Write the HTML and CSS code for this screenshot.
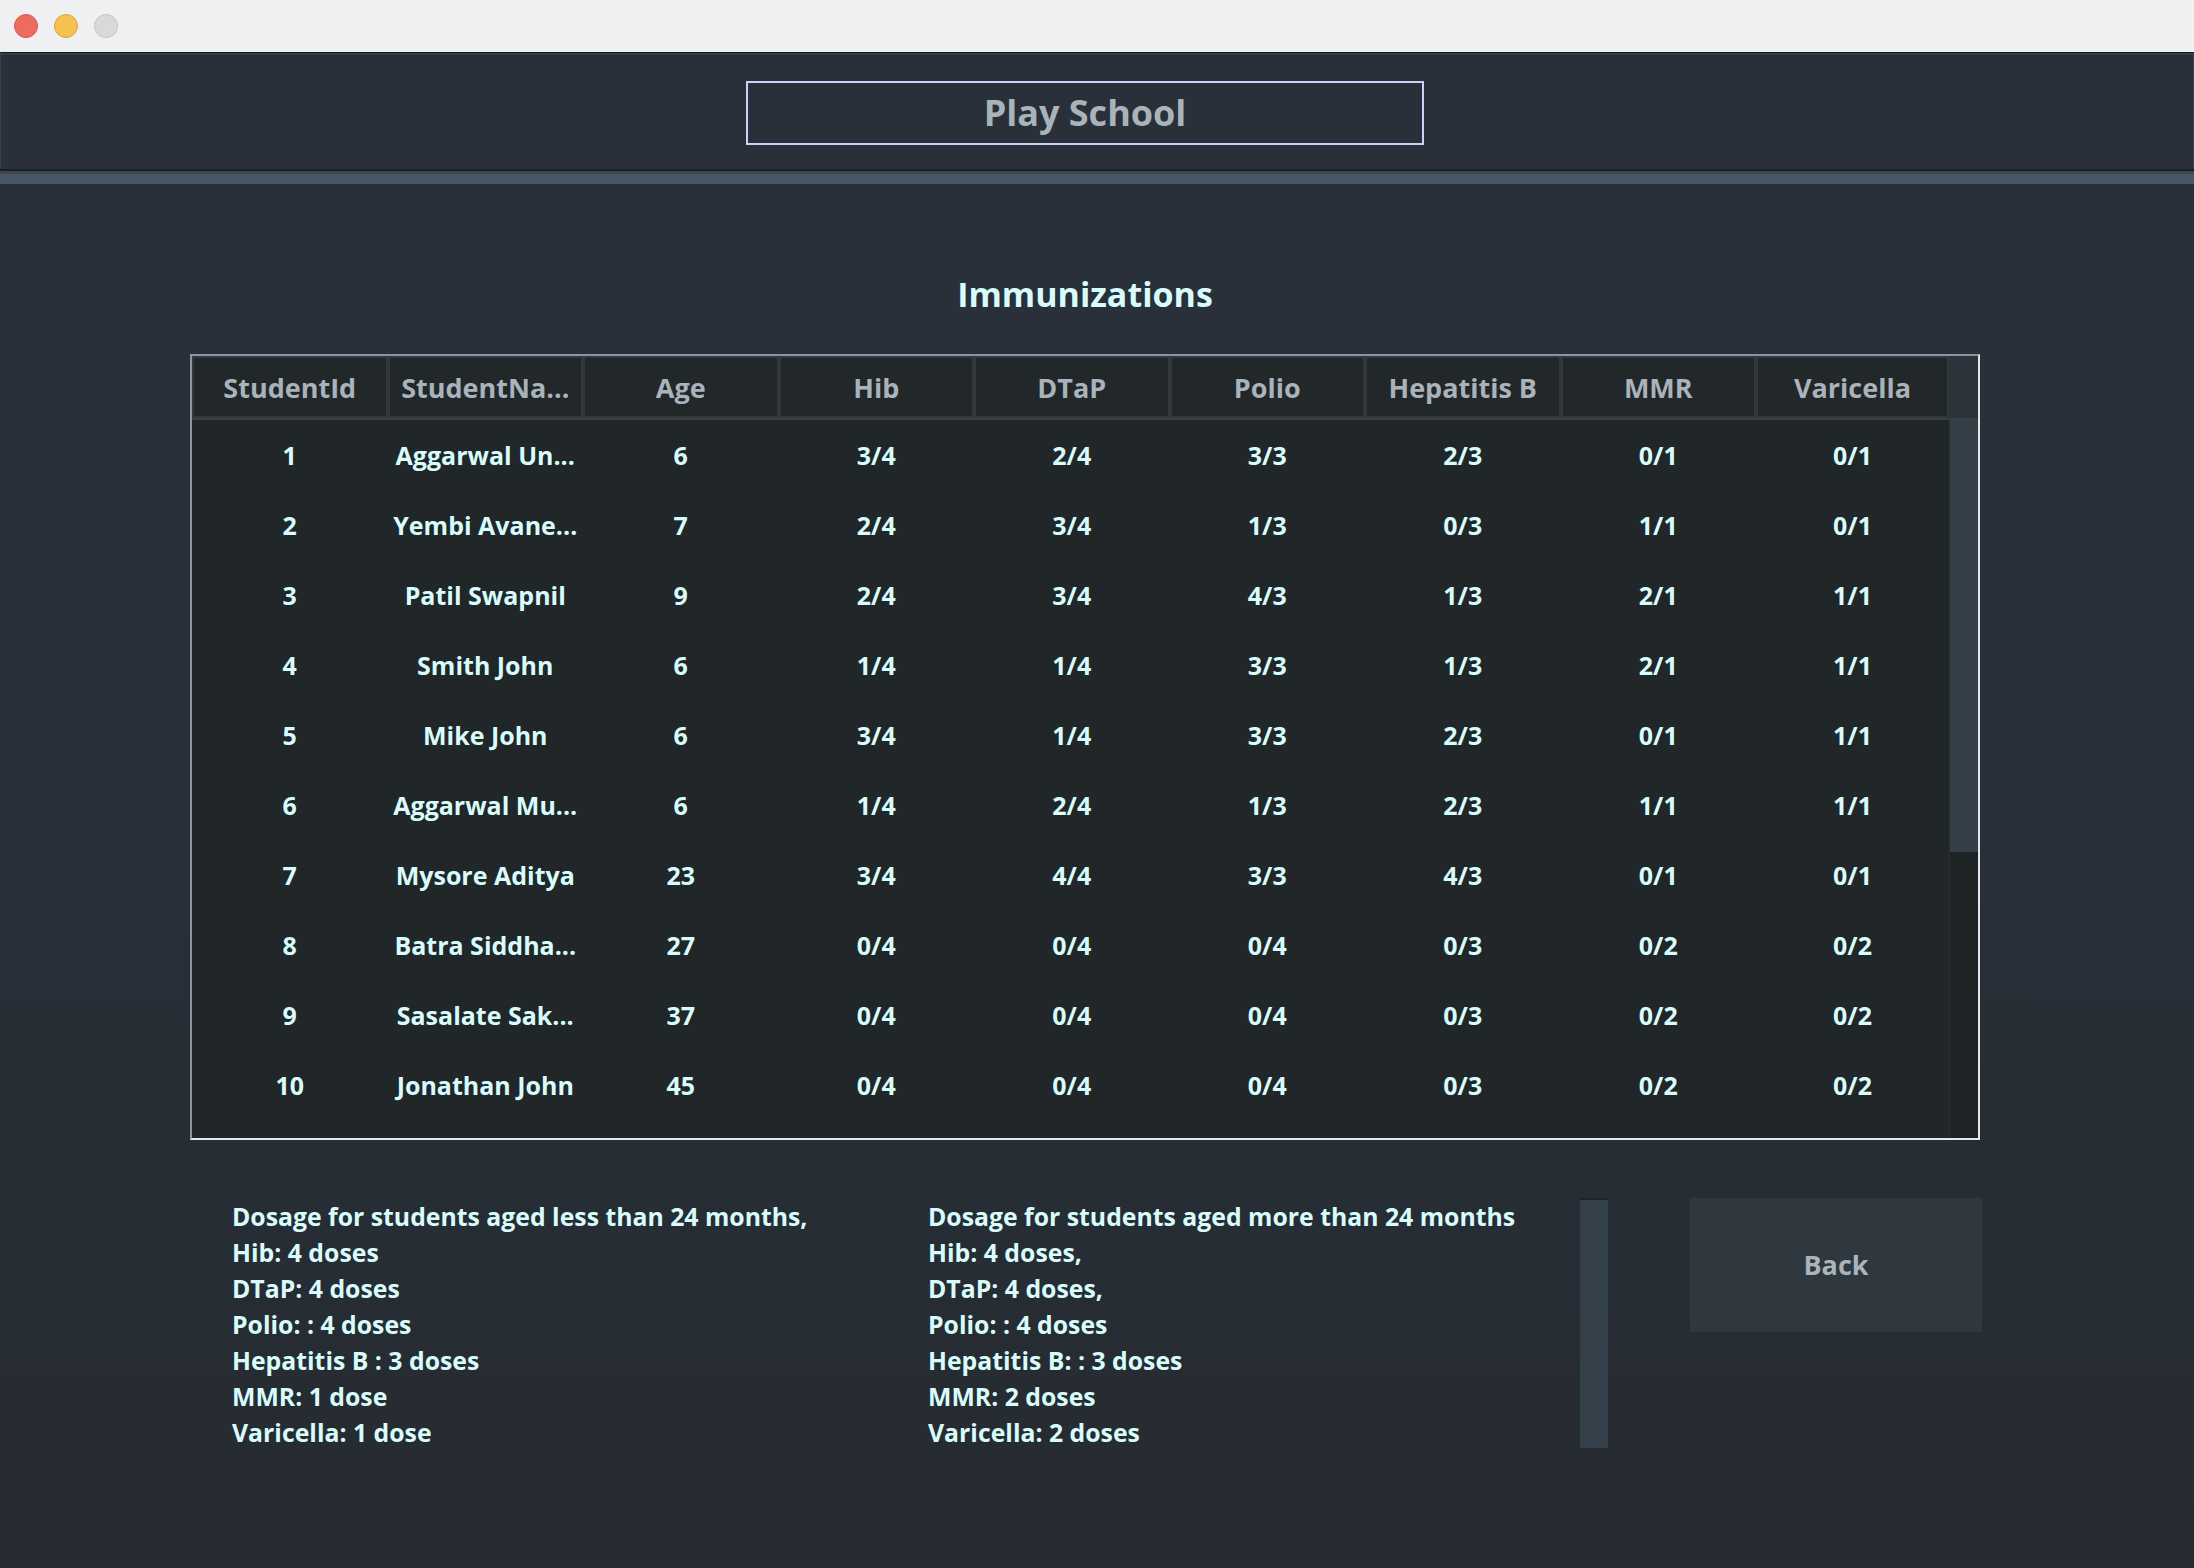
FILE: index.html
```html
<!DOCTYPE html>
<html lang="en">
<head>
<meta charset="utf-8">
<title>Play School - Immunizations</title>
<link rel="stylesheet" href="styles.css">
</head>
<body>
<div class="window">
  <div class="titlebar">
    <span class="light red"></span>
    <span class="light yellow"></span>
    <span class="light grey"></span>
  </div>
  <header class="app-header">
    <div class="brand">Play School</div>
  </header>
  <div class="divider"></div>
  <main class="content">
    <h1 class="page-title">Immunizations</h1>
    <div class="table">
      <div class="thead">
        <div class="th">StudentId</div>
        <div class="th">StudentNa...</div>
        <div class="th">Age</div>
        <div class="th">Hib</div>
        <div class="th">DTaP</div>
        <div class="th">Polio</div>
        <div class="th">Hepatitis B</div>
        <div class="th">MMR</div>
        <div class="th">Varicella</div>
        <div class="th-corner"></div>
      </div>
      <div class="tbody-wrap">
        <div class="tbody">
          <div class="row"><span>1</span><span>Aggarwal Un...</span><span>6</span><span>3/4</span><span>2/4</span><span>3/3</span><span>2/3</span><span>0/1</span><span>0/1</span></div>
          <div class="row"><span>2</span><span>Yembi Avane...</span><span>7</span><span>2/4</span><span>3/4</span><span>1/3</span><span>0/3</span><span>1/1</span><span>0/1</span></div>
          <div class="row"><span>3</span><span>Patil Swapnil</span><span>9</span><span>2/4</span><span>3/4</span><span>4/3</span><span>1/3</span><span>2/1</span><span>1/1</span></div>
          <div class="row"><span>4</span><span>Smith John</span><span>6</span><span>1/4</span><span>1/4</span><span>3/3</span><span>1/3</span><span>2/1</span><span>1/1</span></div>
          <div class="row"><span>5</span><span>Mike John</span><span>6</span><span>3/4</span><span>1/4</span><span>3/3</span><span>2/3</span><span>0/1</span><span>1/1</span></div>
          <div class="row"><span>6</span><span>Aggarwal Mu...</span><span>6</span><span>1/4</span><span>2/4</span><span>1/3</span><span>2/3</span><span>1/1</span><span>1/1</span></div>
          <div class="row"><span>7</span><span>Mysore Aditya</span><span>23</span><span>3/4</span><span>4/4</span><span>3/3</span><span>4/3</span><span>0/1</span><span>0/1</span></div>
          <div class="row"><span>8</span><span>Batra Siddha...</span><span>27</span><span>0/4</span><span>0/4</span><span>0/4</span><span>0/3</span><span>0/2</span><span>0/2</span></div>
          <div class="row"><span>9</span><span>Sasalate Sak...</span><span>37</span><span>0/4</span><span>0/4</span><span>0/4</span><span>0/3</span><span>0/2</span><span>0/2</span></div>
          <div class="row"><span>10</span><span>Jonathan John</span><span>45</span><span>0/4</span><span>0/4</span><span>0/4</span><span>0/3</span><span>0/2</span><span>0/2</span></div>
        </div>
        <div class="vscroll"><div class="thumb"></div></div>
      </div>
    </div>
    <section class="dosage">
      <div class="dose-text">
        <p>Dosage for students aged less than 24 months,</p>
        <p>Hib: 4 doses</p>
        <p>DTaP: 4 doses</p>
        <p>Polio: : 4 doses</p>
        <p>Hepatitis B : 3 doses</p>
        <p>MMR: 1 dose</p>
        <p>Varicella: 1 dose</p>
      </div>
      <div class="dose-text">
        <p>Dosage for students aged more than 24 months</p>
        <p>Hib: 4 doses,</p>
        <p>DTaP: 4 doses,</p>
        <p>Polio: : 4 doses</p>
        <p>Hepatitis B: : 3 doses</p>
        <p>MMR: 2 doses</p>
        <p>Varicella: 2 doses</p>
      </div>
      <div class="side-bar"></div>
      <button class="back-btn" type="button">Back</button>
    </section>
  </main>
</div>
</body>
</html>
```

FILE: styles.css
```css
* { box-sizing: border-box; }

html, body {
  margin: 0;
  padding: 0;
}

body {
  width: 2194px;
  height: 1568px;
  overflow: hidden;
  font-family: "Open Sans", "Liberation Sans", sans-serif;
  font-weight: 700;
  background: linear-gradient(to bottom, #29303a 0%, #29303a 40%, #262b31 100%);
}

.window {
  display: flex;
  flex-direction: column;
  height: 1568px;
}

/* ---------- title bar ---------- */
.titlebar {
  height: 52px;
  background: #eff0f2;
  display: flex;
  align-items: center;
  gap: 16px;
  padding-left: 14px;
  flex: none;
}

.light {
  width: 24px;
  height: 24px;
  border-radius: 50%;
  border: 1px solid;
}
.light.red { background: #ee6b60; border-color: #d5574d; }
.light.yellow { background: #f6c14f; border-color: #dda33b; }
.light.grey { background: #d9d9d9; border-color: #c3c3c3; }

/* ---------- app header ---------- */
.app-header {
  height: 117px;
  flex: none;
  background: #29303a;
  border-top: 1px solid #15181b;
  border-left: 1px solid #3a434c;
  border-right: 1px solid #3a434c;
  box-shadow: inset 0 2px 0 #353e47;
  display: flex;
  justify-content: center;
  align-items: flex-start;
  padding-top: 28px;
  padding-right: 24px;
}

.brand {
  width: 678px;
  height: 64px;
  border: 2px solid #cfd0f6;
  color: #a9b4ba;
  font-size: 36px;
  line-height: 60px;
  text-align: center;
}

.divider {
  height: 15px;
  flex: none;
  background: linear-gradient(to bottom,
    #1c2025 0px, #1c2025 2px,
    #3b4650 2px, #3b4650 5px,
    #485965 5px, #485965 15px);
}

/* ---------- content ---------- */
.content {
  width: 1790px;
  margin-left: 190px;
}

.page-title {
  margin: 87px 0 37px;
  font-size: 34px;
  line-height: 46px;
  font-weight: 700;
  color: #d8fbfc;
  text-align: center;
}

/* ---------- table ---------- */
.table {
  border: 2px solid;
  border-color: #8a96a0 #e4e8eb #e4e8eb #8a96a0;
  background: #212629;
}

.thead,
.row {
  display: grid;
  grid-template-columns: repeat(8, 195.5px) 1fr;
}

.thead {
  grid-template-columns: repeat(8, 195.5px) 1fr 29px;
  height: 64px;
  border-bottom: 2px solid #3a3f43;
}

.th {
  display: flex;
  align-items: center;
  justify-content: center;
  background: #22272a;
  border: 2px solid #33383c;
  color: #a9b3bb;
  font-size: 27px;
  white-space: nowrap;
  overflow: hidden;
}

.th-corner {
  background: #2c333a;
}

.tbody-wrap {
  display: grid;
  grid-template-columns: 1fr 29px;
  height: 718px;
}

.row {
  height: 70px;
  align-items: center;
  text-align: center;
  color: #d8fbfb;
  font-size: 25px;
  white-space: nowrap;
}

.vscroll {
  background: #1e2326;
  border-left: 1px solid #2b3136;
}

.thumb {
  height: 432px;
  background: #343f48;
}

/* ---------- dosage ---------- */
.dosage {
  margin-top: 58px;
  padding-left: 42px;
  display: grid;
  grid-template-columns: 696px 652px 28px 374px;
  align-items: start;
}

.dose-text p {
  margin: 0;
  font-size: 24.8px;
  line-height: 36px;
  color: #d8fbfb;
  white-space: nowrap;
}

.side-bar {
  height: 250px;
  background: #34404a;
  border-top: 2px solid #1e2327;
}

.back-btn {
  margin-left: 82px;
  width: 292px;
  height: 134px;
  border: none;
  background: #2f383f;
  color: #aab4bb;
  font-family: "Open Sans", "Liberation Sans", sans-serif;
  font-weight: 700;
  font-size: 27px;
  padding: 0 0 2px;
}
```
